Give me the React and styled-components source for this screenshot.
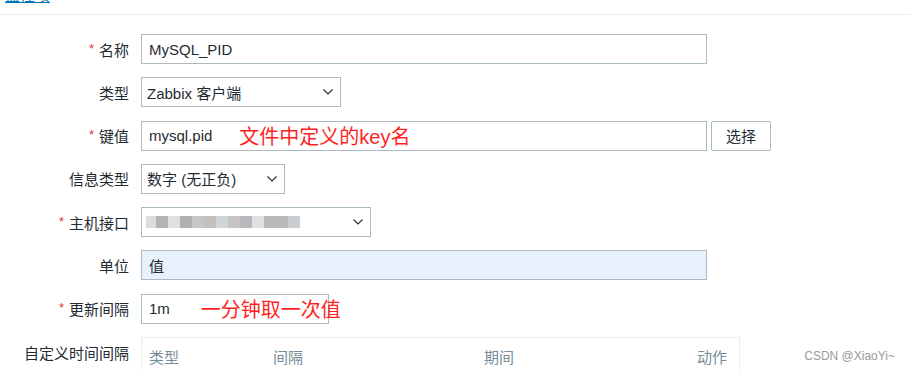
import React from "react";
import styled, { createGlobalStyle } from "styled-components";

const GlobalStyle = createGlobalStyle`
  html, body {
    margin: 0;
    padding: 0;
    background: #ffffff;
  }
  body {
    font-family: "Liberation Sans", Arial, "Noto Sans CJK SC", sans-serif;
    color: #1f2c33;
  }
`;

const hostBlocks = [
  { w: 10, c: "#dcdcdc" },
  { w: 12, c: "#b3b3b3" },
  { w: 12, c: "#e0e0e0" },
  { w: 12, c: "#b0b0b0" },
  { w: 12, c: "#c4c6c9" },
  { w: 12, c: "#c3c0bd" },
  { w: 12, c: "#d0d5d8" },
  { w: 12, c: "#c8c4c3" },
  { w: 12, c: "#b6b8bb" },
  { w: 12, c: "#e1dfe0" },
  { w: 24, c: "#b9b8b8" },
  { w: 12, c: "#cbced0" },
];

function Chevron() {
  return (
    <svg width="10" height="6" viewBox="0 0 10 6">
      <polyline
        points="0.5,0.5 5,5 9.5,0.5"
        fill="none"
        stroke="#1f2c33"
        strokeWidth="1.1"
      />
    </svg>
  );
}

function Label({ required, children }) {
  return (
    <LabelCell>
      {required && <Star>*</Star>}
      {children}
    </LabelCell>
  );
}

export default function App() {
  return (
    <Page>
      <GlobalStyle />
      <TabBar>
        <Tab>监控项</Tab>
      </TabBar>
      <Form>
        <Label required>名称</Label>
        <Field $width={566}>MySQL_PID</Field>

        <Label>类型</Label>
        <Select $width={200}>
          <span>Zabbix 客户端</span>
          <Chevron />
        </Select>

        <Label required>键值</Label>
        <Inline>
          <Field $width={566}>
            mysql.pid
            <Note $gap={27}>文件中定义的key名</Note>
          </Field>
          <Button>选择</Button>
        </Inline>

        <Label>信息类型</Label>
        <Select $width={144}>
          <span>数字 (无正负)</span>
          <Chevron />
        </Select>

        <Label required>主机接口</Label>
        <Select $width={230}>
          <Blur>
            {hostBlocks.map((b, i) => (
              <Pixel key={i} style={{ width: b.w, background: b.c }} />
            ))}
          </Blur>
          <Chevron />
        </Select>

        <Label>单位</Label>
        <Field $width={566} $filled>
          值
        </Field>

        <Label required>更新间隔</Label>
        <Field $width={188}>
          1m
          <Note $gap={31}>一分钟取一次值</Note>
        </Field>

        <Label>自定义时间间隔</Label>
        <Table>
          <HeadCell>类型</HeadCell>
          <HeadCell>间隔</HeadCell>
          <HeadCell>期间</HeadCell>
          <HeadCell $right>动作</HeadCell>
        </Table>
      </Form>
      <Watermark>CSDN @XiaoYi~</Watermark>
    </Page>
  );
}

const Page = styled.div`
  position: relative;
  width: 911px;
  height: 370px;
  overflow: hidden;
  background: #fff;
`;

const TabBar = styled.div`
  display: flex;
  align-items: flex-start;
  height: 15px;
  border-bottom: 1px solid #ebeef0;
  overflow: hidden;
  box-sizing: border-box;
  padding-left: 5px;
`;

const Tab = styled.span`
  display: block;
  margin-top: -11px;
  font-size: 15px;
  line-height: 13px;
  color: #0275b8;
  border-bottom: 1px solid #0275b8;
`;

const Form = styled.div`
  display: grid;
  grid-template-columns: 129px 1fr;
  grid-auto-rows: 30px;
  column-gap: 12px;
  row-gap: 13.3px;
  padding-top: 19px;
`;

const LabelCell = styled.div`
  display: flex;
  align-items: center;
  justify-content: flex-end;
  font-size: 15px;
  color: #1f2c33;
  white-space: nowrap;
`;

const Star = styled.span`
  color: #e33734;
  font-size: 13px;
  margin-right: 5px;
  position: relative;
  top: -1px;
`;

const Field = styled.div`
  box-sizing: border-box;
  width: ${(p) => p.$width}px;
  height: 30px;
  display: flex;
  align-items: center;
  padding: 0 7px;
  border: 1px solid #acbbc2;
  background: ${(p) => (p.$filled ? "#e8f0fc" : "#ffffff")};
  font-size: 15px;
  color: #1f2c33;
  white-space: nowrap;
`;

const Note = styled.span`
  flex-shrink: 0;
  margin-left: ${(p) => p.$gap}px;
  font-size: 20px;
  color: #ff1f1f;
  white-space: nowrap;
`;

const Select = styled.div`
  box-sizing: border-box;
  width: ${(p) => p.$width}px;
  height: 30px;
  display: flex;
  align-items: center;
  justify-content: space-between;
  padding: 0 7px 0 5px;
  border: 1px solid #acbbc2;
  background: #fff;
  font-size: 15px;
  color: #1f2c33;
  white-space: nowrap;
`;

const Blur = styled.div`
  display: flex;
  height: 12px;
  margin-left: -1px;
  filter: blur(0.4px);
`;

const Pixel = styled.span`
  display: block;
  height: 100%;
`;

const Inline = styled.div`
  display: flex;
  gap: 4px;
`;

const Button = styled.button`
  box-sizing: border-box;
  width: 60px;
  height: 30px;
  padding: 0;
  border: 1px solid #acbbc2;
  border-radius: 2px;
  background: #fff;
  font-family: inherit;
  font-size: 15px;
  color: #1f2c33;
`;

const Table = styled.div`
  box-sizing: border-box;
  width: 599px;
  height: 40px;
  display: grid;
  grid-template-columns: 124px 211px 1fr 120px;
  align-items: start;
  padding: 8px 12px 0 7px;
  border-top: 1px solid #ebebeb;
  border-left: 1px solid #ebebeb;
  border-right: 1px solid #ebebeb;
`;

const HeadCell = styled.div`
  font-size: 15px;
  color: #768d99;
  text-align: ${(p) => (p.$right ? "right" : "left")};
`;

const Watermark = styled.div`
  position: absolute;
  right: 16px;
  bottom: 7px;
  font-size: 12px;
  color: #9a9a9a;
`;
